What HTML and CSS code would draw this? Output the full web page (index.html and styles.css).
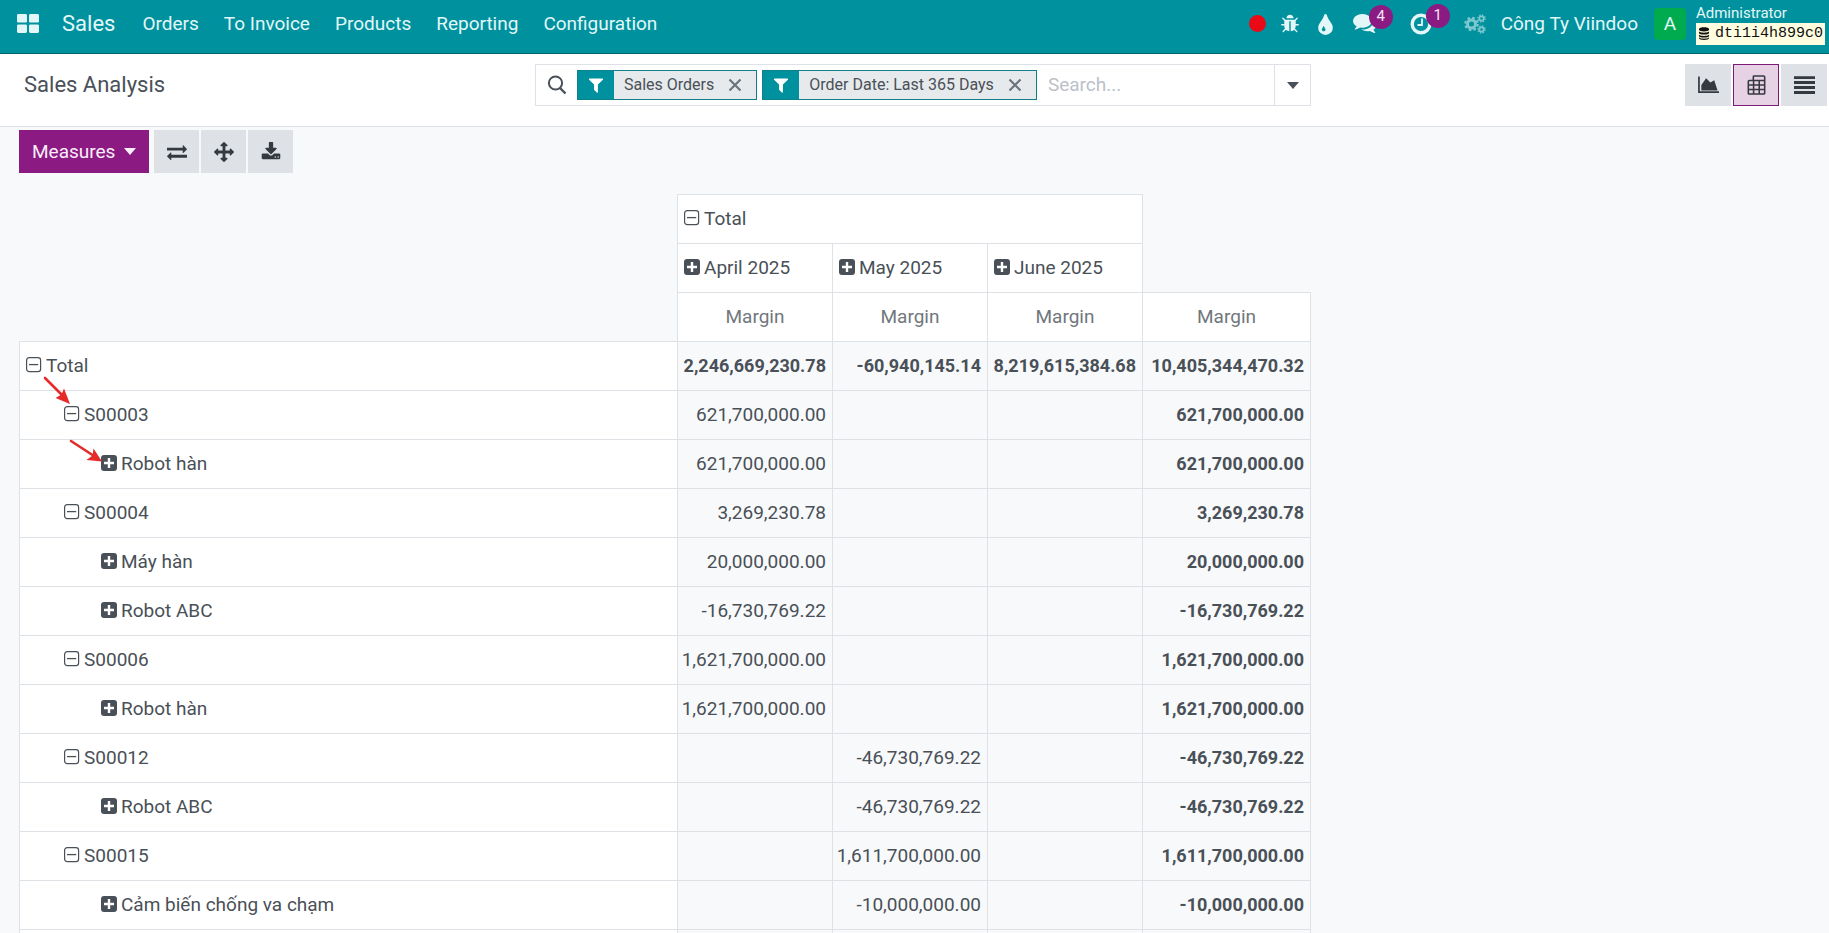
FILE: index.html
```
<!DOCTYPE html>
<html lang="en">
<head>
<meta charset="utf-8">
<title>Sales Analysis</title>
<link rel="stylesheet" href="styles.css">
</head>
<body>
<svg class="sprite" aria-hidden="true">
  <symbol id="plus" viewBox="0 0 16 16"><rect width="16" height="16" rx="3" fill="currentColor"/><path d="M8 3v10M3 8h10" stroke="#fff" stroke-width="2.4"/></symbol>
  <symbol id="minus" viewBox="0 0 16 16"><rect x="0.6" y="0.6" width="14" height="14" rx="2.6" fill="none" stroke="currentColor" stroke-width="1.2"/><path d="M3 7.6h9.2" stroke="currentColor" stroke-width="1.3"/></symbol>
  <symbol id="filter" viewBox="0 0 1792 1792"><path fill="currentColor" d="M1595 295q17 41-14 70l-493 493v742q0 42-39 59-13 5-25 5-27 0-45-19l-256-256q-19-19-19-45v-486l-493-493q-31-29-14-70 17-39 59-39h1280q42 0 59 39z"/></symbol>
  <symbol id="cross" viewBox="0 0 14 14"><path d="M1.500 1.500l11 11M12.500 1.500l-11 11" stroke="currentColor" stroke-width="2.2"/></symbol>
  <symbol id="caret" viewBox="0 0 12 7"><path d="M0 0h12L6 7z" fill="currentColor"/></symbol>
</svg>

<header class="navbar">
  <nav class="menu">
    <button class="apps" aria-label="Apps"><svg viewBox="0 0 22 19"><g fill="currentColor"><rect width="10" height="8.6" rx="1.4"/><rect x="12" width="10" height="8.6" rx="1.4"/><rect y="10.4" width="10" height="8.6" rx="1.4"/><rect x="12" y="10.4" width="10" height="8.6" rx="1.4"/></g></svg></button>
    <a class="brand" href="#">Sales</a>
    <a href="#">Orders</a>
    <a href="#">To Invoice</a>
    <a href="#">Products</a>
    <a href="#">Reporting</a>
    <a href="#">Configuration</a>
  </nav>
  <div class="systray">
    <span class="record"></span>
    <button class="bug" aria-label="Debug"><svg viewBox="0 0 1792 1792"><path fill="currentColor" d="M1696 960q0 26-19 45t-45 19h-224q0 171-67 290l208 209q19 19 19 45t-19 45q-18 19-45 19t-45-19l-198-197q-5 5-15 13t-42 28.5-65 36.5-82 29-97 13v-896h-128v896q-51 0-101.5-13.5t-87-33-66-39-43.5-32.5l-15-14-183 207q-20 21-48 21-24 0-43-16-19-18-20.5-44.5t15.5-46.5l202-227q-58-114-58-274h-224q-26 0-45-19t-19-45 19-45 45-19h224v-294l-173-173q-19-19-19-45t19-45 45-19 45 19l173 173h844l173-173q19-19 45-19t45 19 19 45-19 45l-173 173v294h224q26 0 45 19t19 45zm-480-576h-640q0-133 93.5-226.5t226.5-93.5 226.5 93.5 93.5 226.5z"/></svg></button>
    <button class="drop" aria-label="Theme"><svg viewBox="384 0 1024 1536"><path fill="currentColor" d="M896 1152q0-36-20-69-1-1-15.5-22.5t-25.5-38-25-44-21-50.5q-4-16-21-16t-21 16q-7 23-21 50.5t-25 44-25.5 38-15.5 22.5q-20 33-20 69 0 53 37.5 90.5t90.5 37.5 90.5-37.5 37.5-90.5zm512-128q0 212-150 362t-362 150-362-150-150-362q0-145 81-275 6-9 62.5-90.5t101-151 99.5-178 83-201.5q9-30 34-47t51-17 51.5 17 33.5 47q28 93 83 201.5t99.5 178 101 151 62.5 90.5q81 127 81 275z"/></svg></button>
    <button class="chat" aria-label="Messages"><svg viewBox="0 256 1792 1408"><path fill="currentColor" d="M1408 768q0 139-94 257t-256.5 186.5-353.5 68.5q-86 0-176-16-124 88-278 128-36 9-86 16h-3q-11 0-20.5-8t-11.5-21q-1-3-1-6.5t.5-6.5 2-6l2.5-5 3.5-5.5 4-5 4.5-5 4-4.5q5-6 23-25t26-29.5 22.5-29 25-38.5 20.5-44q-124-72-195-177t-71-224q0-139 94-257t256.5-186.5 353.5-68.5 353.5 68.5 256.5 186.5 94 257zm384 256q0 120-71 224.5t-195 176.5q10 24 20.5 44t25 38.5 22.5 29 26 29.5 23 25q1 1 4 4.5t4.5 5 4 5 3.5 5.5l2.5 5 2 6 .5 6.5-1 6.5q-3 14-13 22t-22 7q-50-7-86-16-154-40-278-128-90 16-176 16-271 0-472-132 58 4 88 4 161 0 309-45t264-129q125-92 192-212t67-254q0-77-23-152 129 71 204 178t75 230z"/></svg><span class="badge">4</span></button>
    <button class="clock" aria-label="Activities"><svg viewBox="0 0 22 22"><circle cx="11" cy="11" r="8.8" fill="none" stroke="currentColor" stroke-width="3.4"/><path d="M12 5.500v6.500H7.500" fill="none" stroke="currentColor" stroke-width="1.8"/></svg><span class="badge">1</span></button>
    <button class="cogs" aria-label="Settings"><svg viewBox="0 0 22 20" fill="none" stroke="currentColor"><circle cx="7.500" cy="10" r="4" stroke-width="3"/><circle cx="7.500" cy="10" r="6.200" stroke-width="2.200" stroke-dasharray="2.600 2.270"/><circle cx="17.500" cy="4.500" r="2.200" stroke-width="1.700"/><circle cx="17.500" cy="4.500" r="3.500" stroke-width="1.400" stroke-dasharray="1.500 1.250"/><circle cx="17.500" cy="15.500" r="2.200" stroke-width="1.700"/><circle cx="17.500" cy="15.500" r="3.500" stroke-width="1.400" stroke-dasharray="1.500 1.250"/></svg></button>
    <a class="company" href="#">Công Ty Viindoo</a>
    <button class="user">
      <span class="avatar">A</span>
      <span class="who"><span class="name">Administrator</span><span class="db"><svg viewBox="0 0 10 13"><path fill="currentColor" d="M0 1.800C0-.4 10-.4 10 1.800v1C10 5 0 5 0 2.800zM0 4.600c2 1.600 8 1.600 10 0v1.400c0 2-10 2-10 0zM0 7.700c2 1.600 8 1.600 10 0v1.400c0 2-10 2-10 0zM0 10.500c2 1.600 8 1.600 10 0v.8c0 2.200-10 2.200-10 0z"/></svg>dti1i4h899c0</span></span>
    </button>
  </div>
</header>

<section class="panel">
  <h1>Sales Analysis</h1>
  <div class="search">
    <svg class="lens" viewBox="0 0 20 20"><circle cx="8.500" cy="8" r="6.600" fill="none" stroke="currentColor" stroke-width="2"/><path d="M13 13l5.500 5.500" stroke="currentColor" stroke-width="2.400"/></svg>
    <div class="facet"><span class="mark"><svg><use href="#filter"/></svg></span><span>Sales Orders</span><button aria-label="Remove Sales Orders"><svg><use href="#cross"/></svg></button></div>
    <div class="facet"><span class="mark"><svg><use href="#filter"/></svg></span><span>Order Date: Last 365 Days</span><button aria-label="Remove Order Date"><svg><use href="#cross"/></svg></button></div>
    <input type="text" placeholder="Search..." aria-label="Search">
    <button class="toggle" aria-label="Search options"><svg><use href="#caret"/></svg></button>
  </div>
  <div class="views">
    <button aria-label="Graph"><svg viewBox="0 0 22 18"><path d="M1 0v16.500h21" fill="none" stroke="currentColor" stroke-width="1.800"/><path d="M3.500 14.800V9L8.500 2l4.500 4.500L17 4l3.500 10.800z" fill="currentColor"/></svg></button>
    <button class="active" aria-label="Pivot"><svg viewBox="0 0 20 22" fill="none" stroke="currentColor" stroke-width="1.700"><path d="M6.500 6V2q0-1 1-1h10.500q1 0 1 1v18q0 1-1 1H2q-1 0-1-1V7q0-1 1-1h17M1 11h18M1 16h18M6.800 6v15M13 6v15"/></svg></button>
    <button aria-label="List"><svg viewBox="0 0 20 17"><path d="M0 1.500h20M0 6.200h20M0 10.900h20M0 15.600h20" stroke="currentColor" stroke-width="2.800"/></svg></button>
  </div>
</section>

<main class="content">
  <div class="tools">
    <button class="measures">Measures <svg><use href="#caret"/></svg></button>
    <div class="group">
      <button aria-label="Flip axis"><svg viewBox="0 0 1792 1792"><path fill="currentColor" d="M1792 1184v192q0 13-9.500 22.500t-22.500 9.500h-1376v192q0 13-9.500 22.500t-22.500 9.500q-12 0-24-10l-319-320q-9-9-9-22 0-14 9-23l320-320q9-9 23-9 13 0 22.500 9.500t9.500 22.500v192h1376q13 0 22.500 9.500t9.500 22.500zm0-544q0 14-9 23l-320 320q-9 9-23 9-13 0-22.500-9.500t-9.500-22.500v-192h-1376q-13 0-22.500-9.500t-9.500-22.500v-192q0-13 9.500-22.500t22.500-9.500h1376v-192q0-14 9-23t23-9q12 0 24 10l319 319q9 9 9 23z"/></svg></button>
      <button aria-label="Expand all"><svg viewBox="0 0 1792 1792"><path fill="currentColor" d="M1792 896q0 26-19 45l-256 256q-19 19-45 19t-45-19-19-45v-128h-384v384h128q26 0 45 19t19 45-19 45l-256 256q-19 19-45 19t-45-19l-256-256q-19-19-19-45t19-45 45-19h128v-384h-384v128q0 26-19 45t-45 19-45-19l-256-256q-19-19-19-45t19-45l256-256q19-19 45-19t45 19 19 45v128h384v-384h-128q-26 0-45-19t-19-45 19-45l256-256q19-19 45-19t45 19l256 256q19 19 19 45t-19 45-45 19h-128v384h384v-128q0-26 19-45t45-19 45 19l256 256q19 19 19 45z"/></svg></button>
      <button aria-label="Download"><svg viewBox="0 0 1792 1792"><path fill="currentColor" d="M1344 1344q0-26-19-45t-45-19-45 19-19 45 19 45 45 19 45-19 19-45zm256 0q0-26-19-45t-45-19-45 19-19 45 19 45 45 19 45-19 19-45zm128-224v320q0 40-28 68t-68 28h-1472q-40 0-68-28t-28-68v-320q0-40 28-68t68-28h465l135 136q58 56 136 56t136-56l136-136h464q40 0 68 28t28 68zm-325-569q17 41-14 70l-448 448q-18 19-45 19t-45-19l-448-448q-31-29-14-70 17-39 59-39h256v-448q0-26 19-45t45-19h256q26 0 45 19t19 45v448h256q42 0 59 39z"/></svg></button>
    </div>
  </div>

  <div class="sheet">
    <table class="pivot">
      <colgroup><col class="c-label"><col class="c-month"><col class="c-month"><col class="c-month"><col class="c-total"></colgroup>
      <thead>
        <tr><td class="blank" rowspan="3"></td><th colspan="3"><svg><use href="#minus"/></svg>Total</th><td class="blank" rowspan="2"></td></tr>
        <tr><th><svg><use href="#plus"/></svg>April 2025</th><th><svg><use href="#plus"/></svg>May 2025</th><th><svg><use href="#plus"/></svg>June 2025</th></tr>
        <tr class="measure"><th>Margin</th><th>Margin</th><th>Margin</th><th>Margin</th></tr>
      </thead>
      <tbody>
        <tr class="sum"><th><svg><use href="#minus"/></svg>Total</th><td>2,246,669,230.78</td><td>-60,940,145.14</td><td>8,219,615,384.68</td><td>10,405,344,470.32</td></tr>
        <tr class="order"><th><svg><use href="#minus"/></svg>S00003</th><td>621,700,000.00</td><td></td><td></td><td>621,700,000.00</td></tr>
        <tr class="product"><th><svg><use href="#plus"/></svg>Robot hàn</th><td>621,700,000.00</td><td></td><td></td><td>621,700,000.00</td></tr>
        <tr class="order"><th><svg><use href="#minus"/></svg>S00004</th><td>3,269,230.78</td><td></td><td></td><td>3,269,230.78</td></tr>
        <tr class="product"><th><svg><use href="#plus"/></svg>Máy hàn</th><td>20,000,000.00</td><td></td><td></td><td>20,000,000.00</td></tr>
        <tr class="product"><th><svg><use href="#plus"/></svg>Robot ABC</th><td>-16,730,769.22</td><td></td><td></td><td>-16,730,769.22</td></tr>
        <tr class="order"><th><svg><use href="#minus"/></svg>S00006</th><td>1,621,700,000.00</td><td></td><td></td><td>1,621,700,000.00</td></tr>
        <tr class="product"><th><svg><use href="#plus"/></svg>Robot hàn</th><td>1,621,700,000.00</td><td></td><td></td><td>1,621,700,000.00</td></tr>
        <tr class="order"><th><svg><use href="#minus"/></svg>S00012</th><td></td><td>-46,730,769.22</td><td></td><td>-46,730,769.22</td></tr>
        <tr class="product"><th><svg><use href="#plus"/></svg>Robot ABC</th><td></td><td>-46,730,769.22</td><td></td><td>-46,730,769.22</td></tr>
        <tr class="order"><th><svg><use href="#minus"/></svg>S00015</th><td></td><td>1,611,700,000.00</td><td></td><td>1,611,700,000.00</td></tr>
        <tr class="product"><th><svg><use href="#plus"/></svg>Cảm biến chống va chạm</th><td></td><td>-10,000,000.00</td><td></td><td>-10,000,000.00</td></tr>
        <tr class="product"><th></th><td></td><td></td><td></td><td></td></tr>
      </tbody>
    </table>
    <svg class="arrow arrow-order" viewBox="0 0 28 28"><path d="M2 2l18 18" stroke="currentColor" stroke-width="2.600" stroke-linecap="round"/><path d="M27 28L12.500 22l6-3.500 2.500-6z" fill="currentColor"/></svg>
    <svg class="arrow arrow-product" viewBox="0 0 34 24"><path d="M2 2l23 15" stroke="currentColor" stroke-width="2.600" stroke-linecap="round"/><path d="M33 22.500l-15.500-1.500 6-4.500 1-7z" fill="currentColor"/></svg>
  </div>
</main>
</body>
</html>
```
FILE: styles.css
```
* { box-sizing: border-box; }
body {
  margin: 0;
  height: 100vh;
  display: flex;
  flex-direction: column;
  overflow: hidden;
  background: #f8f9fb;
  color: #495057;
  font: 19px/28px Roboto, sans-serif;
}
button { border: 0; margin: 0; padding: 0; background: none; color: inherit; font: inherit; cursor: pointer; }
a { color: inherit; text-decoration: none; }
svg { display: block; }
.sprite { position: absolute; width: 0; height: 0; }

.navbar {
  flex: none;
  height: 54px;
  padding: 0 4px 0 17px;
  display: flex;
  justify-content: space-between;
  background: #00919e;
  border-bottom: 1px solid #05646d;
  color: #e3f7f8;
  white-space: nowrap;
}
.menu { display: flex; align-items: center; gap: 25px; padding-bottom: 6px; }
.apps svg { width: 22px; height: 19px; }
.apps { margin-right: -2px; }
.brand { margin-right: 2px; font-size: 22px; }

.systray { display: flex; align-items: center; padding-bottom: 6px; }
.systray button { position: relative; }
.record { width: 17px; height: 17px; border-radius: 50%; background: #ea0a17; margin-right: 14px; }
.bug { margin-right: 18px; }
.bug svg { width: 20px; height: 20px; }
.drop { margin-right: 20px; }
.drop svg { width: 15px; height: 22px; }
.chat { margin-right: 33px; }
.chat svg { width: 24px; height: 19px; }
.clock { margin-right: 32px; }
.clock svg { width: 22px; height: 22px; }
.cogs { margin-right: 15px; color: #7cc8ce; }
.cogs svg { width: 22px; height: 20px; }
.badge {
  position: absolute;
  left: 16px;
  top: -9px;
  width: 24px;
  height: 24px;
  border-radius: 50%;
  background: #8b1a83;
  color: #f3e3f2;
  font-size: 15px;
  line-height: 22px;
}
.company { margin-right: 16px; }
.user { display: flex; align-items: center; gap: 10px; text-align: left; }
.avatar { width: 32px; height: 32px; border-radius: 4px; background: #00ab50; text-align: center; line-height: 32px; }
.who { display: flex; flex-direction: column; font-size: 15px; line-height: 20px; }
.db { display: flex; align-items: center; gap: 6px; padding: 0 2px 0 3px; background: #fffde0; color: #111; font-family: "Liberation Mono", monospace; line-height: 22px; }
.db svg { width: 10px; height: 13px; }

.panel {
  flex: none;
  height: 73px;
  padding: 10px 2px 0 24px;
  display: grid;
  grid-template-columns: 511px 776px 1fr;
  align-items: start;
  background: #fff;
  border-bottom: 1px solid #dee2e6;
}
h1 { margin: 0; font-size: 22px; font-weight: 400; line-height: 42px; }
.search { display: flex; align-items: center; height: 42px; border: 1px solid #dee2e6; }
.lens { width: 20px; height: 20px; margin: 0 10px 0 11px; }
.facet { display: flex; align-items: center; height: 30px; margin-right: 5px; border: 1px solid #12808b; background: #e7eaec; font-size: 16px; white-space: nowrap; }
.mark { display: grid; place-items: center; align-self: stretch; width: 36px; margin-right: 10px; background: #00919e; color: #fff; }
.mark svg { width: 18px; height: 18px; }
.facet button { margin: 0 14px; color: #6c757d; }
.facet button svg { width: 14px; height: 14px; }
.search input { flex: 1; min-width: 0; border: 0; outline: 0; padding: 0 6px; background: none; font: inherit; }
.search input::placeholder { color: #bcc1c8; }
.toggle { display: grid; place-items: center; align-self: stretch; width: 36px; border-left: 1px solid #dee2e6; color: #495057; }
.toggle svg, .measures svg { width: 12px; height: 7px; }
.views { display: flex; justify-content: flex-end; gap: 2px; color: #343a40; }
.views button { display: grid; place-items: center; width: 46px; height: 42px; background: #dee2e6; }
.views .active { background: #e7d1e5; border: 1px solid #7c1a76; }
.views svg { width: 21px; height: 20px; }

.content { flex: 1; min-height: 0; overflow: hidden; padding: 3px 19px 0; }
.tools { display: flex; gap: 5px; }
.measures { display: flex; align-items: center; gap: 9px; height: 43px; padding: 0 13px; background: #8b1a83; color: #fbeffa; }
.group { display: flex; gap: 2px; color: #343a40; }
.group button { display: grid; place-items: center; width: 45px; height: 43px; background: #dee2e6; }
.group svg { width: 20px; height: 20px; }

.sheet { position: relative; margin-top: 21px; }
.pivot { table-layout: fixed; width: 1291px; border-collapse: collapse; }
.c-label { width: 658px; }
.c-month { width: 155px; }
.c-total { width: 168px; }
.pivot th, .pivot td { height: 49px; padding: 0 6px; border: 1px solid #dee2e6; font-weight: 400; text-align: left; white-space: nowrap; }
.pivot th { background: #fff; }
.pivot td { padding-left: 2px; text-align: right; }
.pivot .blank { border: 0; }
.pivot .measure th { text-align: center; color: #71777d; }
.pivot .sum td, .pivot tbody td:last-child { font-weight: 700; font-size: 18px; }
.pivot .order th { padding-left: 44px; }
.pivot .product th { padding-left: 81px; }
.pivot svg { display: inline-block; width: 16px; height: 16px; margin-right: 4px; vertical-align: -1px; }

.arrow { position: absolute; color: #e62a2a; }
.arrow-order { left: 24px; top: 182px; width: 28px; height: 28px; }
.arrow-product { left: 50px; top: 245px; width: 34px; height: 24px; }
```
